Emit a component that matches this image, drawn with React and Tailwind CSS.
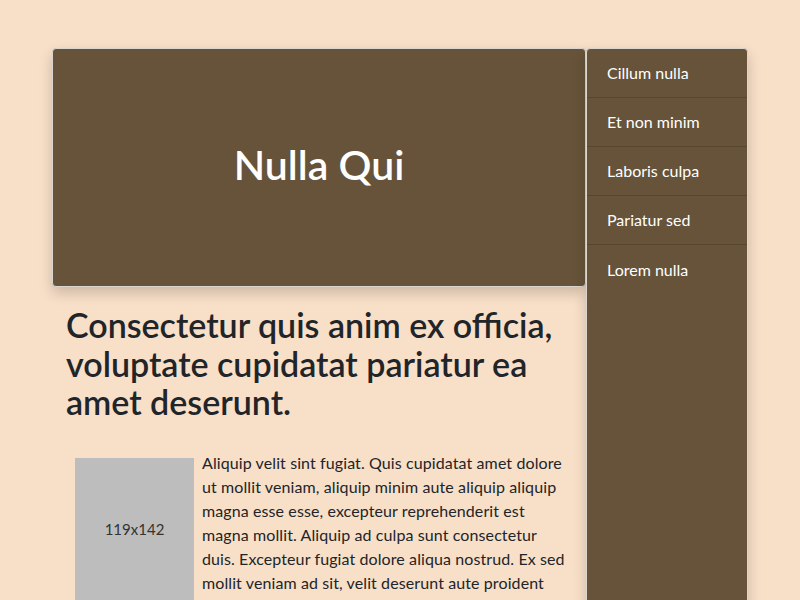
export default function App() {
  const items = ["Cillum nulla", "Et non minim", "Laboris culpa", "Pariatur sed", "Lorem nulla"];
  return (
    <div className="min-h-[600px] h-[600px] overflow-hidden bg-[#f8dfc8] font-['Lato',sans-serif] text-[#212529]">
      <div className="mx-auto w-[696px] pt-[48px] flex items-start">
        <div className="w-[534px] shrink-0">
          <div className="h-[239px] pb-[6px] rounded-[4px] border border-[#d9d5cf] bg-[#665339] shadow-[0_6px_14px_rgba(0,0,0,0.18)] flex items-center justify-center">
            <span className="text-white text-[41px] font-semibold leading-none">Nulla Qui</span>
          </div>
          <div className="px-[14px]">
            <h1 className="mt-[19px] mb-[29px] text-[34px] font-semibold leading-[38.5px]">
              Consectetur quis anim ex officia, voluptate cupidatat pariatur ea amet deserunt.
            </h1>
            <div className="pl-[9px] text-[16px] leading-[24px] tracking-[0.1px]">
              <div className="float-left mt-[7px] mr-[8px] w-[119px] h-[142px] bg-[#bdbdbd] flex items-center justify-center text-[15px] tracking-normal text-[#333]">
                119x142
              </div>
              <p>
                Aliquip velit sint fugiat. Quis cupidatat amet dolore ut mollit veniam, aliquip minim aute aliquip aliquip magna esse esse, excepteur reprehenderit est magna mollit. Aliquip ad culpa sunt consectetur duis. Excepteur fugiat dolore aliqua nostrud. Ex sed mollit veniam ad sit, velit deserunt aute proident cillum. Lorem ipsum dolor sit amet, consectetur adipiscing elit.
              </p>
            </div>
          </div>
        </div>
        <div className="w-[162px] shrink-0 h-[600px] rounded-[4px] border border-[#d9d5cf] bg-[#665339] shadow-[0_6px_14px_rgba(0,0,0,0.18)]">
          {items.map((t, i) => (
            <div
              key={t}
              className={
                i < items.length - 1
                  ? "h-[49px] flex items-center px-[20px] text-[16px] text-white border-b border-[#574630]"
                  : "h-[49px] flex items-center px-[20px] text-[16px] text-white"
              }
            >
              {t}
            </div>
          ))}
        </div>
      </div>
    </div>
  );
}
